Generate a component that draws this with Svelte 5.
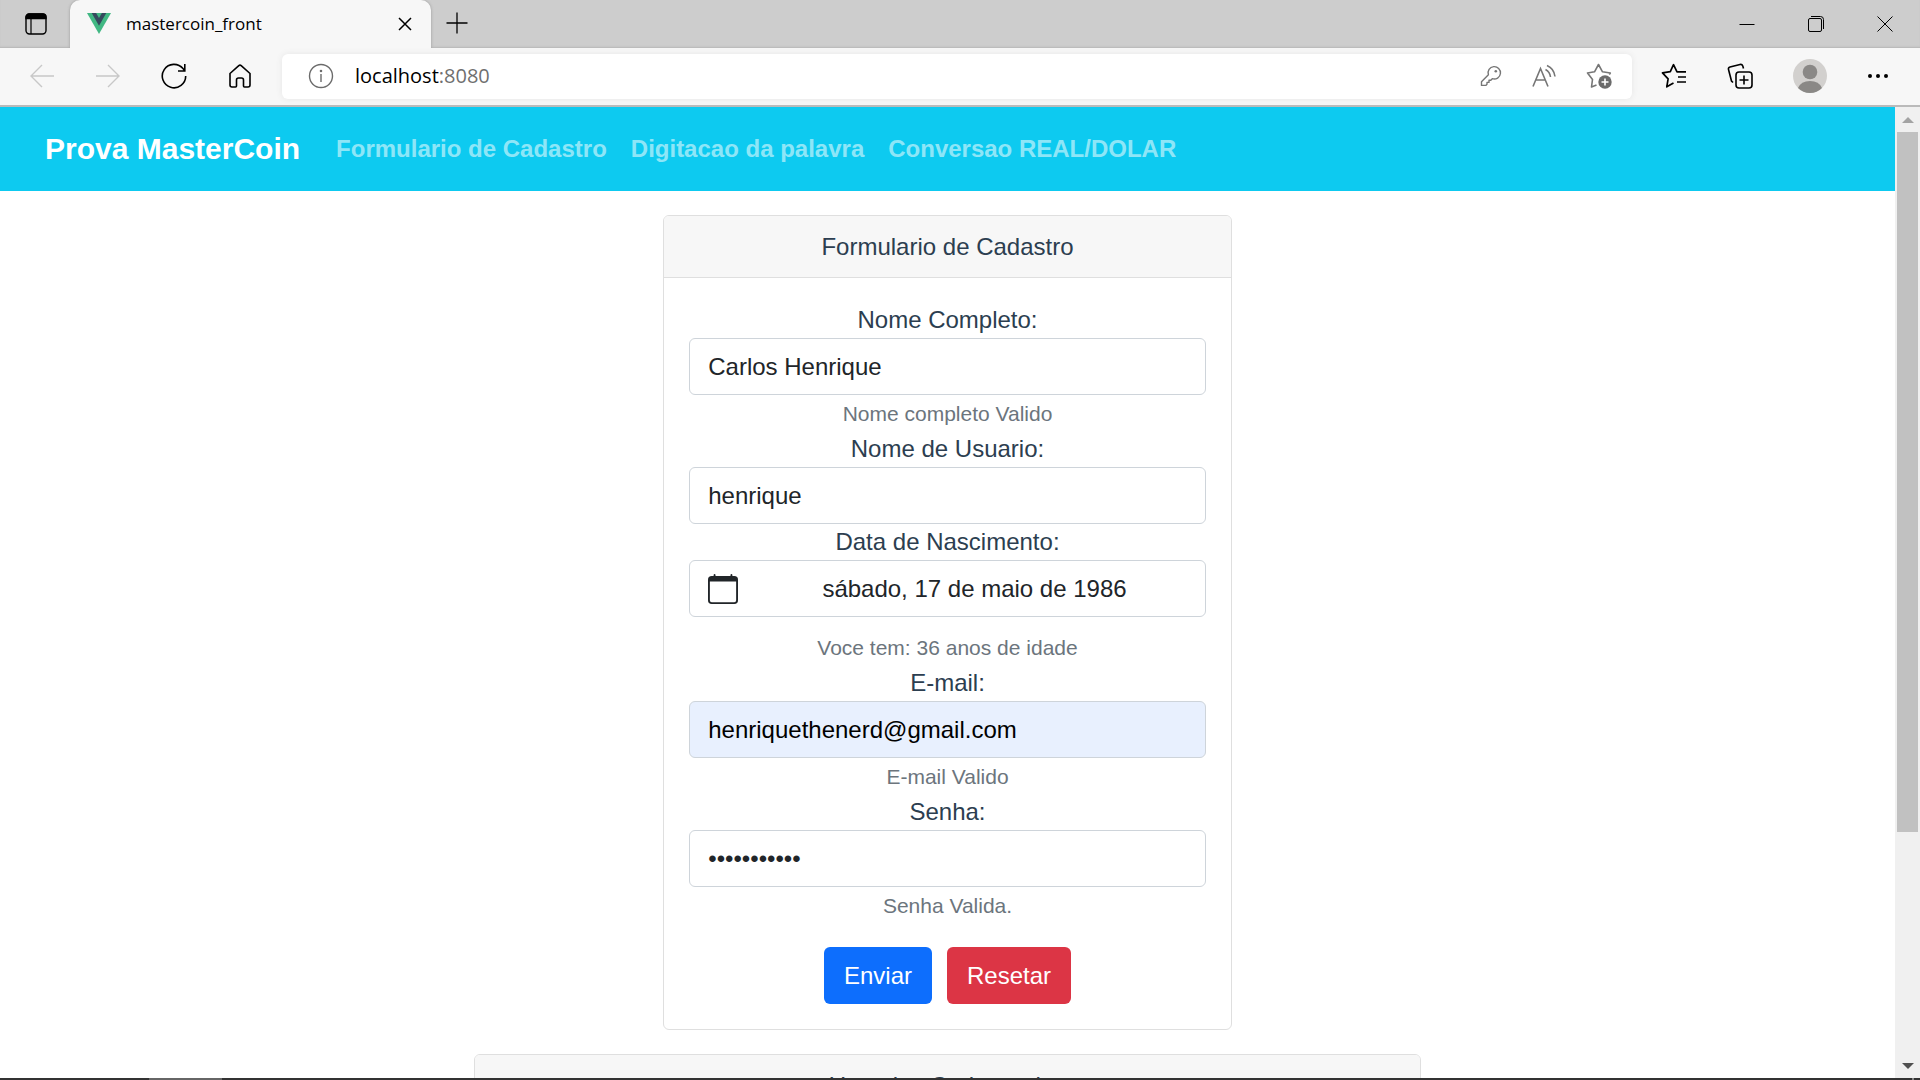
<script>
  let name = $state('Carlos Henrique');
  let user = $state('henrique');
  let email = $state('henriquethenerd@gmail.com');
  let password = $state('senha123456');
  const links = ['Formulario de Cadastro', 'Digitacao da palavra', 'Conversao REAL/DOLAR'];
</script>

<div class="window">
  <header class="tabs">
    <button class="first" aria-label="Menu de guias">
      <svg width="22" height="22" viewBox="0 0 22 22" fill="none" stroke="#000" stroke-width="1.4"><rect x="1" y="1" width="20" height="20" rx="3.5" /><path d="M1 5V4a3 3 0 0 1 3-3h14a3 3 0 0 1 3 3v1.500H1z" fill="#000" /><path d="M6 6v15" stroke-width="1.200" /></svg>
    </button>
    <div class="tab">
      <svg width="24" height="21" viewBox="0 0 24 21"><path d="M0 0h24L12 21z" fill="#41b883" /><path d="M4.700 0h4.400L12 5l2.900-5h4.400L12 12.800z" fill="#35495e" /></svg>
      <span>mastercoin_front</span>
      <button class="close" aria-label="Fechar guia">
        <svg width="14" height="14" viewBox="0 0 14 14" stroke="#000" stroke-width="1.500"><path d="M1 1l12 12M13 1L1 13" /></svg>
      </button>
    </div>
    <button class="plus" aria-label="Nova guia">
      <svg width="22" height="22" viewBox="0 0 22 22" stroke="#000" stroke-width="1.300"><path d="M11 .5v21M.5 11h21" /></svg>
    </button>
    <div class="controls">
      <button aria-label="Minimizar"><svg width="16" height="16" viewBox="0 0 16 16" stroke="#000"><path d="M.5 8.500h15" /></svg></button>
      <button aria-label="Restaurar"><svg width="16" height="16" viewBox="0 0 16 16" fill="none" stroke="#000"><rect x=".5" y="2.500" width="13" height="13" rx="1.500" /><path d="M3 .5h9.500a3 3 0 0 1 3 3V13" /></svg></button>
      <button aria-label="Fechar"><svg width="16" height="16" viewBox="0 0 16 16" stroke="#000"><path d="M.5.5l15 15M15.500.5l-15 15" /></svg></button>
    </div>
  </header>

  <div class="toolbar">
    <div class="history">
      <button aria-label="Voltar" disabled><svg width="26" height="26" viewBox="0 0 26 26" fill="none" stroke="#c8c8c8" stroke-width="1.400"><path d="M25 13H2M13 2L2 13l11 11" /></svg></button>
      <button aria-label="Avançar" disabled><svg width="26" height="26" viewBox="0 0 26 26" fill="none" stroke="#c8c8c8" stroke-width="1.400"><path d="M1 13h23M13 2l11 11-11 11" /></svg></button>
      <button aria-label="Atualizar"><svg width="26" height="26" viewBox="0 0 26 26" fill="none" stroke="#000" stroke-width="1.600"><path d="M24.700 13A11.700 11.700 0 1 1 22 5.600L23.500 7.500M23.800 1v7H17" /></svg></button>
      <button aria-label="Início"><svg width="26" height="26" viewBox="0 0 26 26" fill="none" stroke="#000" stroke-width="1.600"><path d="M3 10.500L11.800 2.700a1.800 1.800 0 0 1 2.400 0L23 10.500V22a2 2 0 0 1-2 2h-3.500a1 1 0 0 1-1-1v-6a2 2 0 0 0-2-2h-3a2 2 0 0 0-2 2v6a1 1 0 0 1-1 1H5a2 2 0 0 1-2-2z" /></svg></button>
    </div>
    <div class="address">
      <svg width="26" height="26" viewBox="0 0 26 26" fill="none" stroke="#6b6b6b" stroke-width="1.400"><circle cx="13" cy="13" r="11.500" /><path d="M13 11v8" /><circle cx="13" cy="8" r=".6" fill="#6b6b6b" /></svg>
      <span class="url">localhost<i>:8080</i></span>
      <button aria-label="Senhas"><svg width="22" height="22" viewBox="0 0 22 22" fill="none" stroke="#767676" stroke-width="1.400" stroke-linejoin="round"><path d="M8.400 9.800A6.200 6.200 0 1 1 12.300 13.700L10.800 15.200H9v2.200H7v1.800L5.800 20.400H1.500v-3.700z" /><circle cx="15.800" cy="6.200" r="1.300" fill="#767676" stroke="none" /></svg></button>
      <button aria-label="Ler em voz alta"><svg width="24" height="24" viewBox="0 0 24 24" fill="none" stroke="#767676" stroke-width="1.600"><path d="M1 22.500L8.500 4.500l7.500 18M4 16h9M13.500 5.500q4.500 2.500 5 7.500M15 1.500q7 3 8 11" /></svg></button>
      <button aria-label="Adicionar aos favoritos"><svg width="26" height="26" viewBox="0 0 26 26" fill="none" stroke="#767676" stroke-width="1.600" stroke-linejoin="round"><path d="M10.500 22L5.500 24l1-7.500L1.500 10l7-1.200L12.500 1.500l4 7.300 7.800 1.200-1 1.500" /><circle cx="19" cy="19" r="6.700" fill="#6b6b6b" stroke="none" /><path d="M19 15.500v7M15.500 19h7" stroke="#fff" /></svg></button>
    </div>
    <div class="actions">
      <button aria-label="Favoritos"><svg width="26" height="26" viewBox="0 0 26 26" fill="none" stroke="#000" stroke-width="1.700" stroke-linejoin="round"><path d="M25 8.800h-9L12.500 1.700 9.300 8.600 1.500 9.800l5.600 6-1.300 8L12.500 20M17 14h8M16 19h9" /></svg></button>
      <button aria-label="Coleções"><svg width="26" height="26" viewBox="0 0 26 26" fill="none" stroke="#000" stroke-width="1.600"><rect x="9" y="9" width="16" height="16" rx="3" /><path d="M17 12.500v9M12.500 17h9M6 19.500L4.500 18 1.500 6.500Q1 4.500 3 4L13 1.500q2-.5 2.800 1.500l.7 2.500" /></svg></button>
      <button aria-label="Perfil"><svg width="34" height="34" viewBox="0 0 34 34"><circle cx="17" cy="17" r="17" fill="#d2d0ce" /><circle cx="17" cy="13" r="7.300" fill="#8a8886" /><path d="M5 29q3-7 12-7t12 7q-5 5-12 5T5 29z" fill="#8a8886" /></svg></button>
      <button aria-label="Mais"><svg width="22" height="22" viewBox="0 0 22 22"><circle cx="3" cy="11" r="2" /><circle cx="11" cy="11" r="2" /><circle cx="19" cy="11" r="2" /></svg></button>
    </div>
  </div>

  <div class="viewport">
    <div class="page">
      <nav>
        <a class="brand" href="#inicio">Prova MasterCoin</a>
        {#each links as link}
          <a href="#pagina">{link}</a>
        {/each}
      </nav>

      <main>
        <section class="card narrow">
          <h2>Formulario de Cadastro</h2>
          <form onsubmit={(e) => e.preventDefault()}>
            <label for="name">Nome Completo:</label>
            <input id="name" type="text" bind:value={name} />
            <small>Nome completo Valido</small>
            <label for="user">Nome de Usuario:</label>
            <input id="user" type="text" bind:value={user} />
            <label for="birth">Data de Nascimento:</label>
            <button id="birth" class="date" type="button">
              <svg width="30" height="30" viewBox="0 0 16 16" fill="#212529"><path d="M3.500 0a.5.5 0 0 1 .5.5V1h8V.5a.5.5 0 0 1 1 0V1h1a2 2 0 0 1 2 2v11a2 2 0 0 1-2 2H2a2 2 0 0 1-2-2V3a2 2 0 0 1 2-2h1V.5a.5.5 0 0 1 .5-.5zM1 4v10a1 1 0 0 0 1 1h12a1 1 0 0 0 1-1V4H1z" /></svg>
              <span>sábado, 17 de maio de 1986</span>
            </button>
            <small class="spaced">Voce tem: 36 anos de idade</small>
            <label for="email">E-mail:</label>
            <input id="email" class="filled" type="email" bind:value={email} />
            <small>E-mail Valido</small>
            <label for="password">Senha:</label>
            <input id="password" type="password" bind:value={password} />
            <small>Senha Valida.</small>
            <div class="buttons">
              <button class="send" type="submit">Enviar</button>
              <button class="reset" type="button">Resetar</button>
            </div>
          </form>
        </section>

        <section class="card wide">
          <h2>Usuarios Cadastrados</h2>
        </section>
      </main>
    </div>
    <div class="scrollbar">
      <svg width="12" height="6" viewBox="0 0 12 6"><path d="M6 0l6 6H0z" fill="#a3a3a3" /></svg>
      <div class="track"><div class="thumb"></div></div>
      <svg width="12" height="6" viewBox="0 0 12 6"><path d="M0 0h12L6 6z" fill="#505050" /></svg>
    </div>
  </div>
  <div class="taskbar"><span class="active"></span><span class="edge"></span></div>
</div>

<style>
  :global(body) { margin: 0; }
  * { box-sizing: border-box; }
  svg { display: block; flex: none; }
  button { font: inherit; padding: 0; border: 0; background: none; }
  .window {
    height: 100vh;
    overflow: hidden;
    display: flex;
    flex-direction: column;
    background: #fff;
    font-family: 'Liberation Sans', Arial, sans-serif;
    font-size: 24px;
    line-height: 36px;
    color: #2c3e50;
  }
  .tabs {
    flex: none;
    display: flex;
    align-items: center;
    height: 48px;
    background: #cdcdcd;
    box-shadow: inset 0 -2px 2px -1px #b5b5b5;
    font: 17px/20px 'Open Sans', sans-serif;
    color: #000;
  }
  .first { padding: 0 23px 0 25px; }
  .tab {
    display: flex;
    align-items: center;
    gap: 15px;
    width: 361px;
    height: 48px;
    padding: 0 19px 1px 17px;
    background: #f7f7f7;
    border-radius: 10px 10px 0 0;
    box-shadow: 0 0 3px #999;
    clip-path: inset(0 -4px 0 -4px);
  }
  .close { margin-left: auto; }
  .plus { padding: 0 0 2px 15px; }
  .controls { display: flex; gap: 53px; margin-left: auto; padding: 0 27px 1px 0; }
  .toolbar {
    flex: none;
    display: flex;
    align-items: center;
    height: 59px;
    padding-bottom: 1px;
    background: #f7f7f7;
    border-bottom: 2px solid #bababa;
  }
  .history { display: flex; gap: 40px; padding: 0 29px; }
  .address {
    flex: 1;
    display: flex;
    align-items: center;
    height: 45px;
    padding: 0 20px 0 26px;
    background: #fff;
    border-radius: 6px;
    box-shadow: 0 0 6px #e6e6e6;
    font: 20px/24px 'Open Sans', sans-serif;
    color: #000;
  }
  .address button { margin-left: 30px; }
  .url { margin-left: 21px; margin-right: auto; }
  .url i { font-style: normal; color: #6f6f6f; }
  .actions { display: flex; align-items: center; gap: 40px; padding: 0 31px 0 29px; }
  .viewport { flex: 1; min-height: 0; display: flex; }
  .page { flex: 1; overflow: hidden; }
  nav {
    display: flex;
    align-items: center;
    gap: 24px;
    height: 84px;
    padding: 0 45px;
    background: #0dcaf0;
    font-weight: bold;
  }
  nav a { color: rgba(255, 255, 255, 0.55); text-decoration: none; }
  nav .brand { font-size: 30px; color: #fff; margin-right: 12px; }
  main { display: flex; flex-direction: column; align-items: center; gap: 24px; padding-top: 24px; }
  .card { border: 1px solid #dfdfdf; border-radius: 6px; background: #fff; overflow: hidden; }
  .narrow { width: 30%; }
  .wide { width: 50%; }
  h2 {
    margin: 0;
    padding: 13px 24px 12px;
    font: inherit;
    text-align: center;
    background: #f7f7f7;
    border-bottom: 1px solid #dfdfdf;
  }
  form { display: flex; flex-direction: column; padding: 24px 25px 25px; text-align: center; }
  small { padding-top: 2px; font-size: 21px; line-height: 34px; color: #6c757d; }
  .spaced { margin-top: 12px; }
  input, .date {
    width: 100%;
    height: 57px;
    padding: 0 18px;
    border: 1px solid #ced4da;
    border-radius: 6px;
    background: #fff;
    font: inherit;
    color: #212529;
  }
  .filled { background: #e8f0fe; color: #000; }
  .date { display: flex; align-items: center; }
  .date span { flex: 1; padding-left: 24px; }
  .buttons { display: flex; justify-content: center; gap: 15px; padding-top: 24px; }
  .buttons button { height: 57px; padding: 0 20px; border-radius: 6px; color: #fff; }
  .send { background: #0d6efd; }
  .reset { background: #dc3545; }
  .scrollbar {
    display: flex;
    flex-direction: column;
    align-items: center;
    width: 25px;
    padding: 10px 0 9px;
    background: #f0f0f0;
  }
  .track { flex: 1; width: 21px; padding: 9px 0 10px; }
  .thumb { height: 76%; background: #c1c1c1; }
  .taskbar { flex: none; display: flex; justify-content: space-between; height: 2px; padding: 0 6px 0 149px; background: #333; }
  .active { width: 73px; background: #666; }
  .edge { width: 2px; background: #888; }
</style>
